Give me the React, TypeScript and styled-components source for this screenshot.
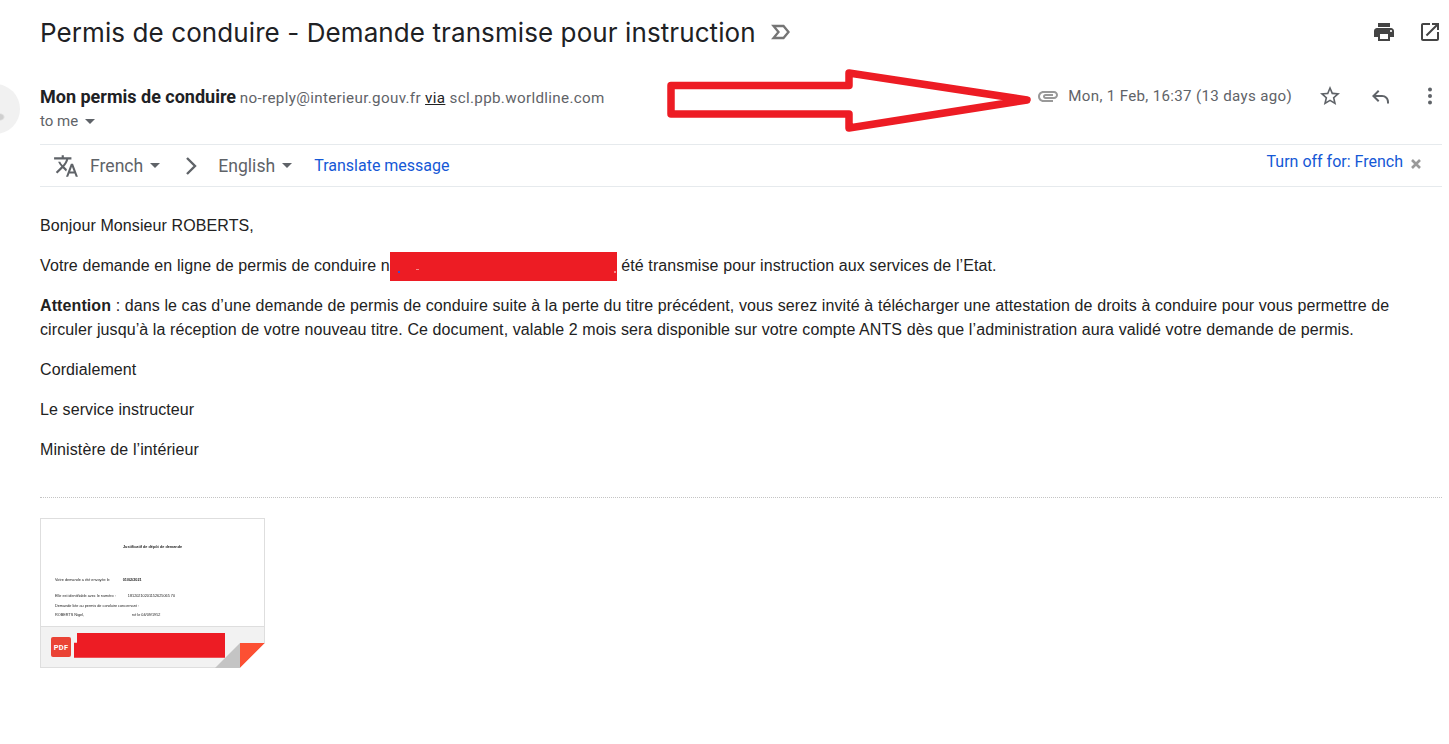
import React from 'react';
import styled, {createGlobalStyle} from 'styled-components';

const GlobalStyle = createGlobalStyle`
  html, body {
    margin: 0;
    background: #fff;
    overflow: hidden;
  }
`;

const Page = styled.div`
  position: relative;
  width: 1449px;
  height: 744px;
  overflow: hidden;
  padding: 0 7px 0 40px;
  box-sizing: border-box;
  font-family: Roboto, "Liberation Sans", sans-serif;
  color: #222;
`;

const SubjectRow = styled.div`
  display: flex;
  align-items: center;
  height: 64px;
`;

const Subject = styled.h1`
  margin: 0;
  font-family: Inter, Roboto, sans-serif;
  font-size: 26px;
  font-weight: 400;
  letter-spacing: 0.09px;
  color: #202124;
  white-space: nowrap;
`;

const ImportanceIcon = styled.svg`
  width: 20px;
  height: 20px;
  margin-left: 15px;
  fill: none;
  stroke: #757575;
  stroke-width: 2.3;
`;

const RightIcons = styled.div`
  display: flex;
  gap: 22px;
  margin-left: auto;
`;

const Icon = styled.svg<{$size?: number; $color?: string}>`
  width: ${p => p.$size || 24}px;
  height: ${p => p.$size || 24}px;
  fill: ${p => p.$color || '#444'};
  flex: none;
`;

const SenderRow = styled.div`
  display: flex;
  height: 81px;
  box-sizing: border-box;
  padding-top: 20px;
  border-bottom: 1px solid #e6eaed;
`;

const SenderInfo = styled.div`
  flex: 1;
  padding-top: 1px;
`;

const SenderLine = styled.div`
  font-size: 15.2px;
  line-height: 24px;
  white-space: nowrap;
`;

const SenderName = styled.b`
  font-size: 18px;
  font-weight: 700;
  color: #202124;
`;

const SenderMail = styled.span`
  color: #5f6368;
  letter-spacing: 0.33px;
`;

const Via = styled.u`
  color: #222;
`;

const ToMe = styled.div`
  display: flex;
  align-items: center;
  gap: 7px;
  margin-top: -1px;
  font-size: 15px;
  line-height: 24px;
  color: #5f6368;
`;

const Caret = styled.i`
  display: inline-block;
  width: 0;
  height: 0;
  border: 5px solid transparent;
  border-top-color: #5f6368;
  border-bottom-width: 0;
`;

const MetaGroup = styled.div`
  display: flex;
  align-items: center;
  height: 24px;
`;

const MetaDate = styled.span`
  margin: 0 0 0 8px;
  font-size: 15.1px;
  color: #5f6368;
  letter-spacing: 0.33px;
  white-space: nowrap;
`;

const ActionIcon = styled(Icon)`
  margin-left: 26px;
`;

const TranslateBar = styled.div`
  display: flex;
  align-items: center;
  height: 41px;
  border-bottom: 1px solid #e6eaed;
  padding-left: 13px;
  font-size: 17.6px;
  color: #5f6368;
`;

const Language = styled.span<{$left?: number}>`
  display: inline-flex;
  align-items: center;
  gap: 7px;
  margin-left: ${p => p.$left || 0}px;
`;

const ChevronIcon = styled.svg`
  width: 14px;
  height: 20px;
  margin: 0 19px 0 25px;
  fill: none;
  stroke: #5f6368;
  stroke-width: 2.4;
`;

const BlueLink = styled.a<{$left?: number}>`
  margin-left: ${p => p.$left || 0}px;
  color: #1558d6;
  font-size: 16px;
`;

const TurnOff = styled.div`
  display: flex;
  align-items: flex-start;
  gap: 8px;
  margin-left: auto;
  height: 41px;
  box-sizing: border-box;
  padding: 7px 21px 0 0;
`;

const CloseIcon = styled.svg`
  width: 10px;
  height: 10px;
  margin-top: 7px;
  fill: none;
  stroke: #9a9a9a;
  stroke-width: 2.6;
`;

const Body = styled.div`
  padding: 27px 10px 0 0;
  font-family: "Liberation Sans", Arial, sans-serif;
  font-size: 16px;
  line-height: 24px;
  letter-spacing: 0.1px;
  color: #222;
`;

const Para = styled.p`
  margin: 0 0 16px;
`;

const Redaction = styled.span`
  display: inline-block;
  width: 227px;
  height: 29px;
  margin: -3px 0;
  vertical-align: middle;
  background-color: #ed1c24;
  background-image: linear-gradient(#3a4fd0, #3a4fd0), linear-gradient(#f58a8a, #f58a8a), linear-gradient(#f58a8a, #f58a8a);
  background-size: 2px 2px, 3px 1px, 2px 2px;
  background-position: 8px 19px, 26px 17px, 224px 19px;
  background-repeat: no-repeat;
`;

const Rule = styled.div`
  margin-top: 35px;
  border-top: 1px dotted #c4c4c4;
`;

const Attachment = styled.div`
  position: relative;
  display: flex;
  flex-direction: column;
  width: 225px;
  height: 150px;
  margin-top: 20px;
  box-sizing: border-box;
  border: 1px solid #dedede;
`;

const Sheet = styled.div`
  flex: 1;
  box-sizing: border-box;
  padding: 26px 14px 0;
  font-family: "Liberation Sans", sans-serif;
  font-size: 3.8px;
  line-height: 5px;
  color: #222;
  filter: blur(0.4px);
`;

const SheetTitle = styled.div`
  margin: 0 0 28px 68px;
  font-weight: 700;
  white-space: nowrap;
`;

const SheetRow = styled.div<{$gap: number; $space: number}>`
  display: flex;
  gap: ${p => p.$gap}px;
  margin-bottom: ${p => p.$space}px;
  white-space: nowrap;
`;

const Footer = styled.div`
  display: flex;
  align-items: center;
  height: 41px;
  flex: none;
  background: #f2f2f2;
  border-top: 1px solid #dedede;
  padding-left: 10px;
  box-sizing: border-box;
`;

const PdfBadge = styled.span`
  display: flex;
  align-items: center;
  justify-content: center;
  width: 20px;
  height: 20px;
  border-radius: 2px;
  background: #ea4335;
  color: #fff;
  font-size: 7.5px;
  font-weight: 700;
  letter-spacing: 0.2px;
  font-family: Roboto, sans-serif;
`;

const FileRedaction = styled.span`
  width: 151px;
  height: 25px;
  margin: -4px 0 0 3px;
  background: #ed1c24;
  clip-path: polygon(3px 0, 100% 0, 100% 100%, 0 100%, 0 10px, 3px 10px);
`;

const Fold = styled.svg`
  position: absolute;
  right: -1px;
  bottom: -1px;
  width: 50px;
  height: 25px;
`;

const Avatar = styled.div`
  position: absolute;
  left: -30px;
  top: 84px;
  width: 50px;
  height: 50px;
  border-radius: 50%;
  background: radial-gradient(ellipse 5px 4px at 30px 33px, #cfcfcf 60%, transparent 100%), #f1f1f1;
`;

const AnnotationArrow = styled.svg`
  position: absolute;
  left: 660px;
  top: 60px;
  width: 380px;
  height: 80px;
  fill: none;
  stroke: #ed1c24;
  stroke-width: 7.5;
  stroke-linejoin: round;
`;

const App = () => (
    <Page>
        <GlobalStyle />
        <SubjectRow>
            <Subject>Permis de conduire - Demande transmise pour instruction</Subject>
            <ImportanceIcon viewBox="0 0 20 20">
                <path d="M2.5 4h10l5 6-5 6h-10l5-6z" />
            </ImportanceIcon>
            <RightIcons>
                <Icon viewBox="0 0 24 24">
                    <path d="M19 8H5c-1.66 0-3 1.34-3 3v6h4v4h12v-4h4v-6c0-1.66-1.34-3-3-3zm-3 11H8v-5h8v5zm3-7c-.55 0-1-.45-1-1s.45-1 1-1 1 .45 1 1-.45 1-1 1zm-1-9H6v4h12V3z" />
                </Icon>
                <Icon viewBox="0 0 24 24">
                    <path d="M19 19H5V5h7V3H5c-1.11 0-2 .9-2 2v14c0 1.1.89 2 2 2h14c1.1 0 2-.9 2-2v-7h-2v7zM14 3v2h3.59l-9.83 9.83 1.41 1.41L19 6.41V10h2V3h-7z" />
                </Icon>
            </RightIcons>
        </SubjectRow>

        <SenderRow>
            <SenderInfo>
                <SenderLine>
                    <SenderName>Mon permis de conduire</SenderName>{' '}
                    <SenderMail>no-reply@interieur.gouv.fr <Via>via</Via> scl.ppb.worldline.com</SenderMail>
                </SenderLine>
                <ToMe>to me <Caret /></ToMe>
            </SenderInfo>
            <MetaGroup>
                <Icon viewBox="0 0 24 24" $color="#999">
                    <path d="M2 12.5C2 9.46 4.46 7 7.5 7H18c2.21 0 4 1.79 4 4s-1.79 4-4 4H9.5C8.12 15 7 13.88 7 12.5S8.12 10 9.5 10H17v2H9.41c-.55 0-.55 1 0 1H18c1.1 0 2-.9 2-2s-.9-2-2-2H7.5C5.57 9 4 10.57 4 12.5S5.57 16 7.5 16H17v2H7.5C4.46 18 2 15.54 2 12.5z" />
                </Icon>
                <MetaDate>Mon, 1 Feb, 16:37 (13 days ago)</MetaDate>
                <ActionIcon viewBox="0 0 24 24" $color="#5f6368">
                    <path d="M22 9.24l-7.19-.62L12 2 9.19 8.63 2 9.24l5.46 4.73L5.82 21 12 17.27 18.18 21l-1.63-7.03L22 9.24zM12 15.4l-3.76 2.27 1-4.28-3.32-2.88 4.38-.38L12 6.1l1.71 4.04 4.38.38-3.32 2.88 1 4.28L12 15.4z" />
                </ActionIcon>
                <ActionIcon viewBox="0 0 24 24" $color="#5f6368">
                    <path d="M21 19.5h-2V18c0-3-2.2-5-5-5H7.8l3.6 3.6L10 18l-6-6 6-6 1.4 1.4L7.8 11H14c4 0 7 3 7 7z" />
                </ActionIcon>
                <ActionIcon viewBox="0 0 24 24" $color="#5f6368">
                    <circle cx="12" cy="5.5" r="2" />
                    <circle cx="12" cy="12" r="2" />
                    <circle cx="12" cy="18.5" r="2" />
                </ActionIcon>
            </MetaGroup>
        </SenderRow>

        <TranslateBar>
            <Icon viewBox="0 0 24 24" $size={26} $color="#5f6368">
                <path d="M12.87 15.07l-2.54-2.51.03-.03c1.74-1.94 2.98-4.17 3.71-6.53H17V4h-7V2H8v2H1v1.99h11.17C11.5 7.92 10.44 9.75 9 11.35 8.07 10.32 7.3 9.19 6.69 8h-2c.73 1.63 1.73 3.17 2.98 4.56l-5.09 5.02L4 19l5-5 3.11 3.11.76-2.04zM18.5 10h-2L12 22h2l1.12-3h4.75L21 22h2l-4.5-12zm-2.62 7l1.62-4.33L19.12 17h-3.24z" />
            </Icon>
            <Language $left={11}>French <Caret /></Language>
            <ChevronIcon viewBox="0 0 14 20">
                <path d="M2 2l8 8-8 8" />
            </ChevronIcon>
            <Language>English <Caret /></Language>
            <BlueLink $left={22}>Translate message</BlueLink>
            <TurnOff>
                <BlueLink>Turn off for: French</BlueLink>
                <CloseIcon viewBox="0 0 10 10">
                    <path d="M1 1l8 8M9 1l-8 8" />
                </CloseIcon>
            </TurnOff>
        </TranslateBar>

        <Body>
            <Para>Bonjour Monsieur ROBERTS,</Para>
            <Para>Votre demande en ligne de permis de conduire n<Redaction /> été transmise pour instruction aux services de l’Etat.</Para>
            <Para>
                <b>Attention</b> : dans le cas d’une demande de permis de conduire suite à la perte du titre précédent, vous serez invité à télécharger une attestation de droits à conduire pour vous permettre de circuler jusqu’à la réception de votre nouveau titre. Ce document, valable 2 mois sera disponible sur votre compte ANTS dès que l’administration aura validé votre demande de permis.
            </Para>
            <Para>Cordialement</Para>
            <Para>Le service instructeur</Para>
            <Para>Ministère de l’intérieur</Para>
        </Body>

        <Rule />

        <Attachment>
            <Sheet>
                <SheetTitle>Justificatif de dépôt de demande</SheetTitle>
                <SheetRow $gap={13} $space={11}><span>Votre demande a été envoyée le</span><b>01/02/2021</b></SheetRow>
                <SheetRow $gap={12} $space={5}><span>Elle est identifiable avec le numéro :</span><span>18120210201152625065 70</span></SheetRow>
                <SheetRow $gap={0} $space={4}><span>Demande liée au permis de conduire concernant :</span></SheetRow>
                <SheetRow $gap={48} $space={0}><span>ROBERTS Nigel,</span><span>né le 04/09/1952</span></SheetRow>
            </Sheet>
            <Footer>
                <PdfBadge>PDF</PdfBadge>
                <FileRedaction />
            </Footer>
            <Fold viewBox="0 0 50 25">
                <polygon points="0,25 25,0 25,25" fill="#c4c4c4" />
                <polygon points="25,0 50,0 25,25" fill="#fc5033" />
                <polygon points="25,25 50,0 50,25" fill="#fff" />
            </Fold>
        </Attachment>

        <Avatar />
        <AnnotationArrow viewBox="660 60 380 80">
            <polygon points="671,85.5 849,85.5 849,73 1027,100 849,128 849,114 671,114" />
        </AnnotationArrow>
    </Page>
);

export default App;
